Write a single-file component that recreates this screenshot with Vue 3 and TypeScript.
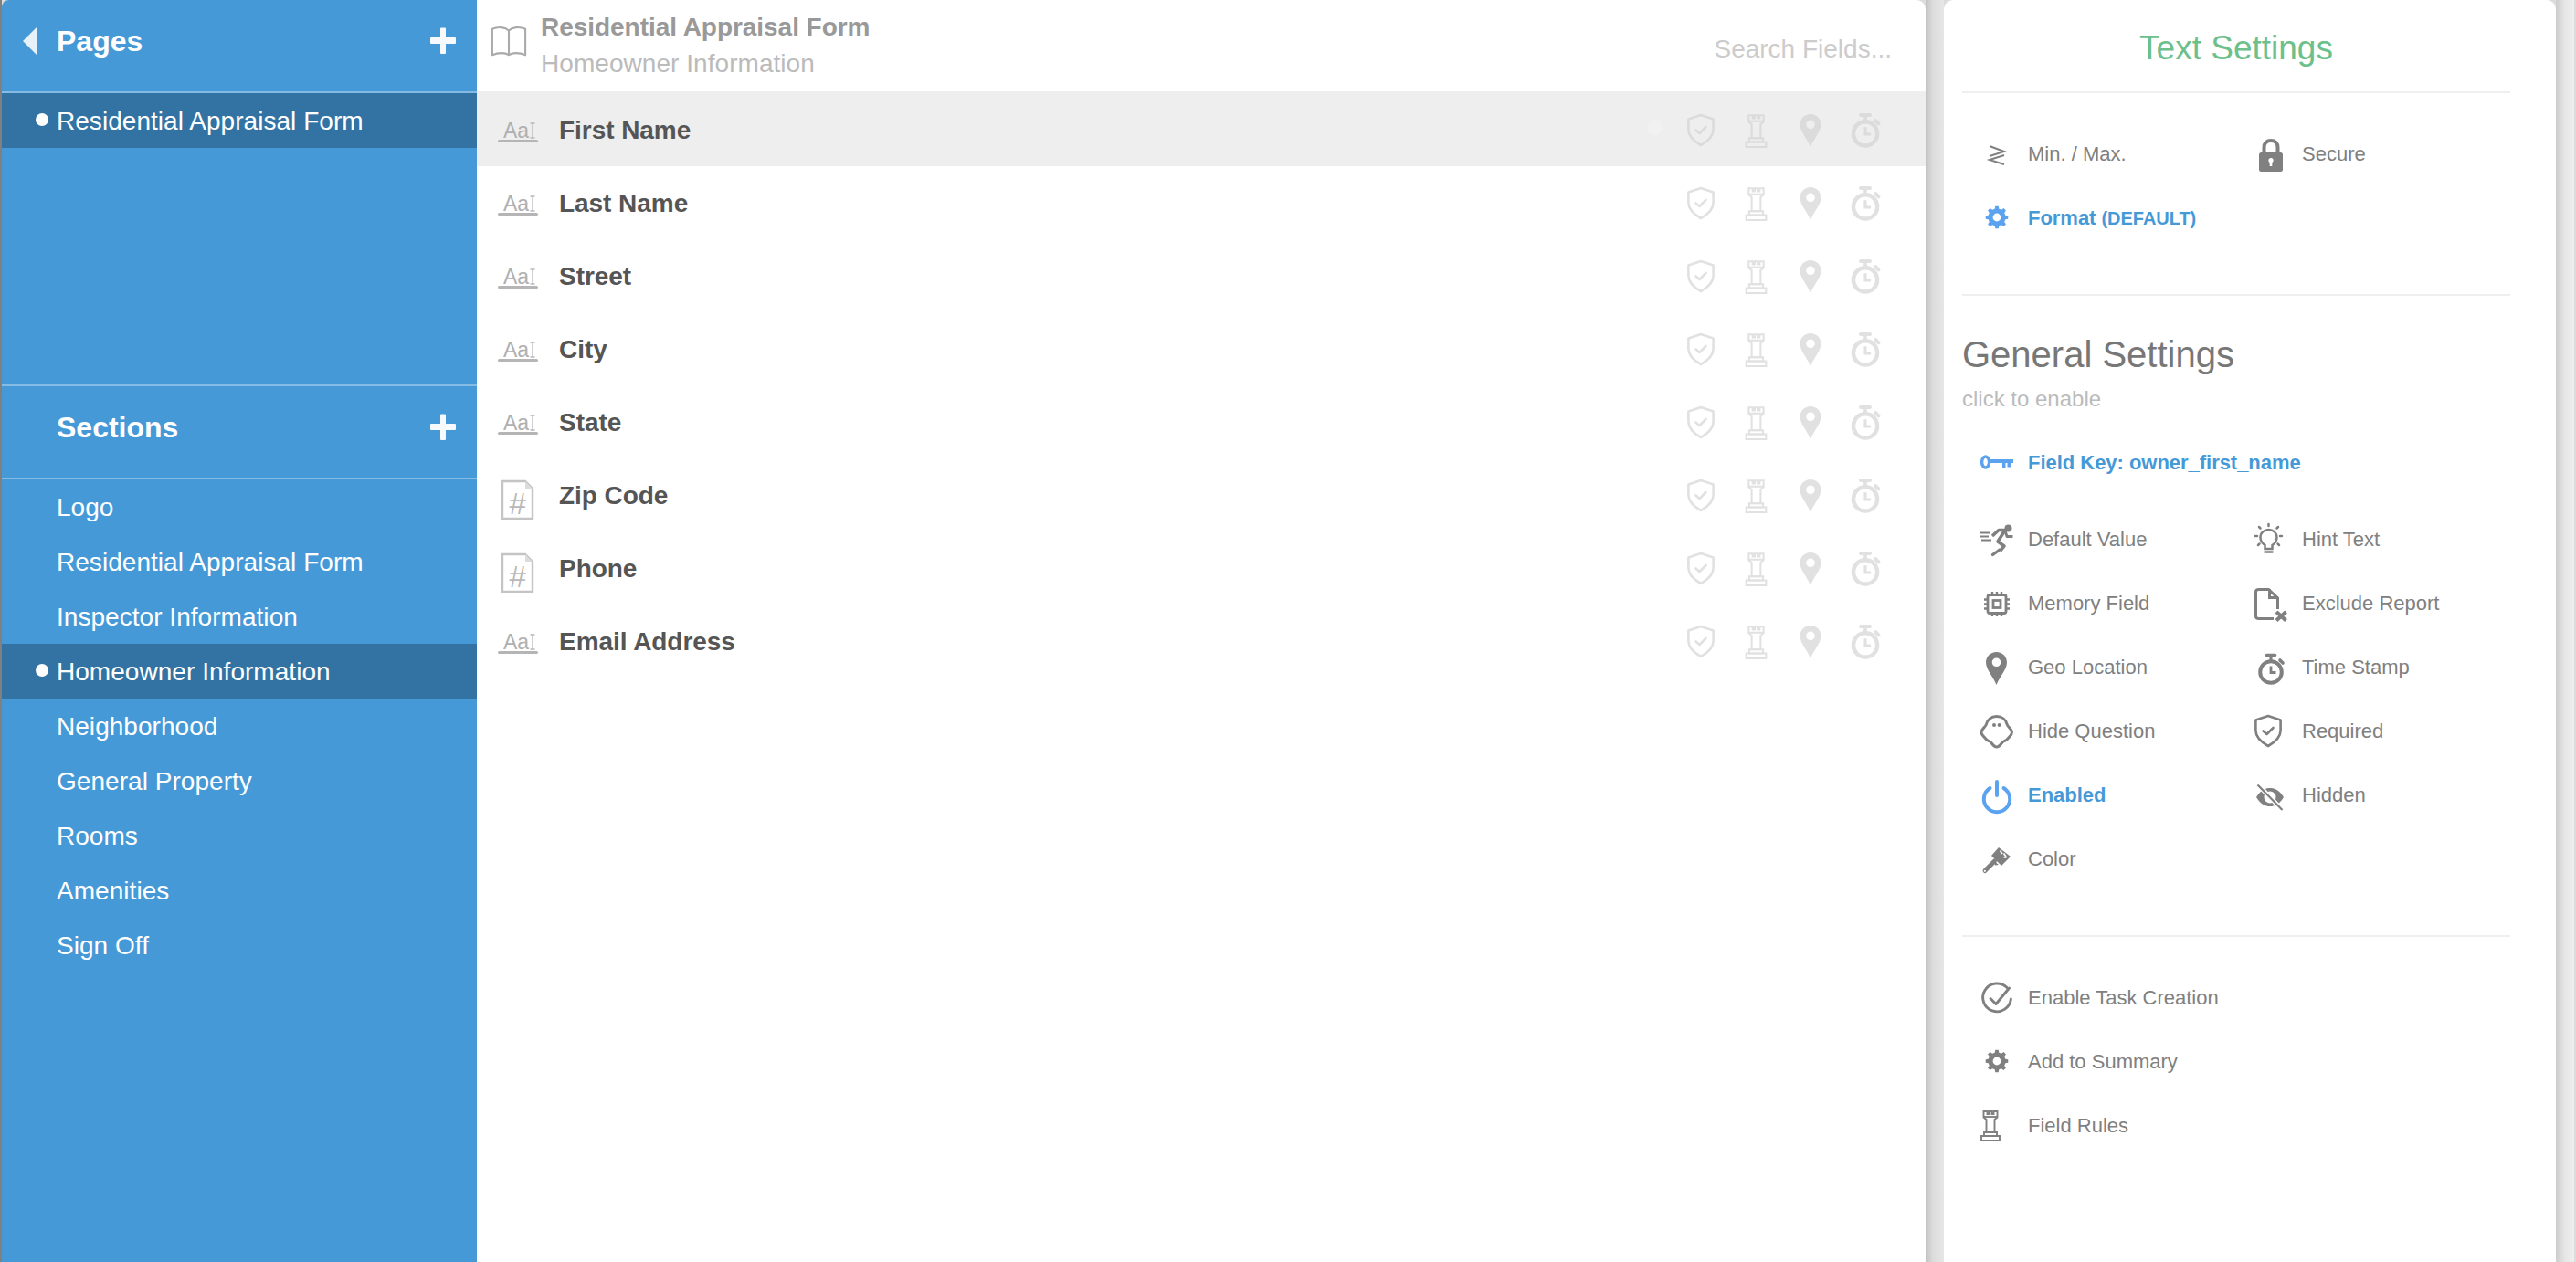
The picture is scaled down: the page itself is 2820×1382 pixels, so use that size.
<script setup lang="ts">
function gear(cx: number, cy: number, ro: number, ri: number, hole: number): string {
  const pts: string[] = [];
  const n = 8;
  for (let i = 0; i < n; i++) {
    const a = (i / n) * Math.PI * 2;
    const w = Math.PI / n;
    const seq: [number, number][] = [
      [ri, a - w * 0.62],
      [ro, a - w * 0.36],
      [ro, a + w * 0.36],
      [ri, a + w * 0.62],
    ];
    for (const [r, t] of seq) {
      pts.push(`${(cx + r * Math.sin(t)).toFixed(2)} ${(cy - r * Math.cos(t)).toFixed(2)}`);
    }
  }
  const ring = `M${cx - hole} ${cy}a${hole} ${hole} 0 1 0 ${hole * 2} 0a${hole} ${hole} 0 1 0 ${-hole * 2} 0Z`;
  return `<path fill="currentColor" fill-rule="evenodd" d="M${pts.join("L")}Z${ring}"/>`;
}

const icons: Record<string, string> = {
  shield:
    '<g fill="none" stroke="currentColor" stroke-width="2.6" stroke-linejoin="round" stroke-linecap="round"><path d="M15 2 L28.6 6.4 V18 C28.6 26 22 31 15 35 C8 31 1.4 26 1.4 18 V6.4 Z"/><path d="M9.5 18.5 L13.5 22 L20.5 15"/></g>',
  rook:
    '<g fill="none" stroke="currentColor" stroke-width="1.9"><path d="M3.5 3 H7.5 V6 H9.5 V3 H12.5 V6 H14.5 V3 H18.5 V9.5 L15.5 12 V26 H6.5 V12 L3.5 9.5 Z"/><path d="M3.5 9 H18.5"/><path d="M4 26 H18 V30 H4 Z"/><path d="M1 30 H21 V35 H1 Z"/></g>',
  pin:
    '<path fill="currentColor" fill-rule="evenodd" d="M17.5 2 C24 2 29 7 29 13.5 C29 21 21 29 17.5 38 C14 29 6 21 6 13.5 C6 7 11 2 17.5 2 Z M17.5 8.5 A4.8 4.8 0 1 0 17.5 18.1 A4.8 4.8 0 1 0 17.5 8.5 Z"/>',
  watch:
    '<g fill="none" stroke="currentColor"><circle cx="18" cy="24" r="11.8" stroke-width="4"/><path d="M13.5 5.5 H22.5" stroke-width="3.6" stroke-linecap="round"/><path d="M18 6 V11" stroke-width="3.2"/><path d="M28 11 L31 14" stroke-width="3.6" stroke-linecap="round"/><path d="M18 17.5 V24.5 H23.5" stroke-width="2.8"/></g>',
  minmax:
    '<g fill="none" stroke="currentColor" stroke-width="2"><path d="M10 10 L26 16 L10 21"/><path d="M26 20 L10 25 L26 30"/></g>',
  lock:
    '<path d="M10.5 18 V11.5 C10.5 6.5 13.5 4 18 4 C22.5 4 25.5 6.5 25.5 11.5 V18" fill="none" stroke="currentColor" stroke-width="4"/><rect x="5" y="17" width="26" height="21" rx="2.5" fill="currentColor"/><circle cx="18" cy="25.5" r="2.6" fill="#fff"/><rect x="16.7" y="26" width="2.6" height="6" fill="#fff"/>',
  gear: gear(18, 18, 12.4, 9.6, 4.4),
  key:
    '<g fill="none" stroke="currentColor"><ellipse cx="5.6" cy="18" rx="4" ry="6" stroke-width="3.4"/><path d="M9.5 17 H36" stroke-width="4"/></g><path fill="currentColor" d="M24 18 H27.5 V25 H24 Z M29.5 18 H33 V23.5 H29.5 Z"/>',
  runner:
    '<circle cx="30.5" cy="6.5" r="4" fill="currentColor"/><g fill="none" stroke="currentColor" stroke-linejoin="round"><path d="M0 11.5 H11 M0 15.5 H9 M1 19.5 H12" stroke-width="1.8"/><path d="M13 15 L20 8.5 L27 8.5 L19 21 L26 26 L22 31" stroke-width="3.6"/><path d="M27 9 L29 15.5 L35.5 15.5" stroke-width="2.8"/><path d="M13.5 35.5 L21 30" stroke-width="3.4" stroke-linecap="round"/></g>',
  chip:
    '<g fill="none" stroke="currentColor"><rect x="8" y="9.5" width="20" height="20" rx="2" stroke-width="2.8"/><rect x="14" y="15.5" width="8" height="8" stroke-width="2.8"/><path d="M13 6 V9 M18 6 V9 M23 6 V9 M13 30 V33 M18 30 V33 M23 30 V33 M4 14.5 H7 M4 19.5 H7 M4 24.5 H7 M29 14.5 H32 M29 19.5 H32 M29 24.5 H32" stroke-width="2.4"/></g>',
  ghost:
    '<path fill="none" stroke="currentColor" stroke-width="3" stroke-linejoin="round" d="M17.7 2.5 C24 2.5 28 6.5 29 11 C29.8 14.5 34.5 16 34.5 20 C34.5 23.5 31 25 29.8 27 C28.5 29.5 25.5 29 24 31 C22 33.5 20.5 36 17.7 36 C15 36 13.5 33.5 11.5 31 C10 29 7 29.5 5.8 27 C4.5 25 1 23.5 1 20 C1 16 5.7 14.5 6.5 11 C7.5 6.5 11.5 2.5 17.7 2.5 Z"/><circle cx="15" cy="12" r="2" fill="currentColor"/><circle cx="20.6" cy="12" r="2" fill="currentColor"/>',
  power:
    '<g fill="none" stroke="currentColor" stroke-linecap="round"><path d="M10.5 11 A14.2 14.2 0 1 0 25.5 11" stroke-width="4"/><path d="M18 4 V19" stroke-width="4"/></g>',
  brush:
    '<path fill="currentColor" d="M12 15 L20 6 L33 16 L23 26 Z"/><path d="M21.5 9.5 L24 13 M25.5 12.5 L28 16 M28.5 17 L25.5 17" fill="none" stroke="#fff" stroke-width="1.7"/><path d="M14.5 20.5 L20 25 L16 25.5 Z" fill="currentColor"/><path d="M15.5 21 L5 31.5" fill="none" stroke="currentColor" stroke-width="5" stroke-linecap="round"/><circle cx="4.8" cy="31.8" r="1.1" fill="#fff"/>',
  bulb:
    '<g fill="none" stroke="currentColor" stroke-width="2.5" stroke-linecap="round"><path d="M11.5 29 V25 C8.5 23 6.5 20 6.5 16.5 C6.5 11.5 10.5 8 15.5 8 C20.5 8 24.5 11.5 24.5 16.5 C24.5 20 22.5 23 19.5 25 V29 Z"/><path d="M11.5 32.5 H19.5" stroke-width="2.6"/><path d="M15.5 2 V4 M5 5 L6.5 6.5 M26 5 L24.5 6.5 M1 15 H3 M28 15 H30 M4 25 L5.5 23.5 M27 25 L25.5 23.5"/></g>',
  filex:
    '<path fill="none" stroke="currentColor" stroke-width="3" d="M25.5 25 V13 L15.5 3.5 H5 Q1.5 3.5 1.5 6 V33 Q1.5 35.5 5 35.5 H21"/><path fill="currentColor" d="M15 3 H18 V11 H26 V14 H15 Z"/><path fill="none" stroke="currentColor" stroke-width="4.2" d="M24 28 L34.5 37.5 M34.5 28 L24 37.5"/>',
  eye:
    '<path fill="currentColor" fill-rule="evenodd" d="M2 21 C7 13 12 11 17 11 C22 11 27 13 32 21 C27 29 22 31 17 31 C12 31 7 29 2 21 Z M17 14.5 A6.5 6.5 0 1 0 17 27.5 A6.5 6.5 0 1 0 17 14.5 Z"/><path d="M4 7.5 L30.5 35" stroke="#fff" stroke-width="5"/><path d="M3.5 7.5 L30.5 35" stroke="currentColor" stroke-width="2.2"/>',
  check:
    '<g fill="none" stroke="currentColor" stroke-width="2.9" stroke-linecap="round" stroke-linejoin="round"><path d="M29 7.5 A15.4 15.4 0 1 0 33.4 20"/><path d="M11 19.5 L17 25.5 L31.5 8"/></g>',
};

interface Setting { label: string; icon: string; on?: boolean }

const pages = ["Residential Appraisal Form"];
const sections = [
  "Logo",
  "Residential Appraisal Form",
  "Inspector Information",
  "Homeowner Information",
  "Neighborhood",
  "General Property",
  "Rooms",
  "Amenities",
  "Sign Off",
];
const fields: { name: string; kind: "text" | "num" }[] = [
  { name: "First Name", kind: "text" },
  { name: "Last Name", kind: "text" },
  { name: "Street", kind: "text" },
  { name: "City", kind: "text" },
  { name: "State", kind: "text" },
  { name: "Zip Code", kind: "num" },
  { name: "Phone", kind: "num" },
  { name: "Email Address", kind: "text" },
];
const rowIcons = [
  { name: "shield", vb: "-3 0 36 36", size: 36 },
  { name: "rook", vb: "-7 0 36 36", size: 39 },
  { name: "pin", vb: "-0.5 1 36 36", size: 36 },
  { name: "watch", vb: "0 2 36 36", size: 40 },
];
const general: Setting[] = [
  { label: "Default Value", icon: "runner" },
  { label: "Hint Text", icon: "bulb" },
  { label: "Memory Field", icon: "chip" },
  { label: "Exclude Report", icon: "filex" },
  { label: "Geo Location", icon: "pin" },
  { label: "Time Stamp", icon: "watch" },
  { label: "Hide Question", icon: "ghost" },
  { label: "Required", icon: "shield" },
  { label: "Enabled", icon: "power", on: true },
  { label: "Hidden", icon: "eye" },
  { label: "Color", icon: "brush" },
];
const extras: Setting[] = [
  { label: "Enable Task Creation", icon: "check" },
  { label: "Add to Summary", icon: "gear" },
  { label: "Field Rules", icon: "rook" },
];
</script>

<template>
  <div class="app">
    <aside class="sidebar">
      <header class="side-head">
        <svg class="back" width="15" height="30" viewBox="0 0 15 30"><path d="M15 0 V30 L0 15 Z" /></svg>
        <span class="side-title">Pages</span>
        <svg class="plus" width="30" height="30" viewBox="0 0 30 30"><path d="M12 1.5 Q12 0.5 13 0.5 H17 Q18 0.5 18 1.5 V11 H28 Q29 11 29 12 V17 Q29 18 28 18 H18 V28 Q18 29 17 29 H13 Q12 29 12 28 V18 H2 Q1 18 1 17 V12 Q1 11 2 11 H12 Z" /></svg>
      </header>
      <ul class="nav pages-list">
        <li v-for="p in pages" :key="p" class="nav-item active">{{ p }}</li>
      </ul>
      <header class="side-head sections-head">
        <span class="side-title">Sections</span>
        <svg class="plus" width="30" height="30" viewBox="0 0 30 30"><path d="M12 1.5 Q12 0.5 13 0.5 H17 Q18 0.5 18 1.5 V11 H28 Q29 11 29 12 V17 Q29 18 28 18 H18 V28 Q18 29 17 29 H13 Q12 29 12 28 V18 H2 Q1 18 1 17 V12 Q1 11 2 11 H12 Z" /></svg>
      </header>
      <ul class="nav">
        <li
          v-for="s in sections"
          :key="s"
          class="nav-item"
          :class="{ active: s === 'Homeowner Information' }"
        >{{ s }}</li>
      </ul>
    </aside>

    <main class="main">
      <header class="main-head">
        <svg class="book" width="40" height="36" viewBox="0 0 42 36">
          <path d="M21 6 C17 2 9 1 2 4 V34 C9 31 17 31 21 34 C25 31 33 31 40 34 V4 C33 1 25 2 21 6 Z M21 6 V34" fill="none" stroke="#aaa" stroke-width="2.2" stroke-linejoin="round" />
        </svg>
        <div class="crumbs">
          <div class="crumb-title">Residential Appraisal Form</div>
          <div class="crumb-sub">Homeowner Information</div>
        </div>
        <div class="search">Search Fields...</div>
      </header>
      <div class="fields">
        <div v-for="(f, i) in fields" :key="f.name" class="field" :class="{ current: i === 0 }">
          <svg v-if="f.kind === 'text'" class="type-icon" width="48" height="30" viewBox="0 0 48 30">
            <text x="7" y="20.5" class="aa">Aa</text>
            <path d="M36.5 5 H41.5 M36.5 21 H41.5 M39 5 V21" fill="none" stroke="#b8b8b8" stroke-width="1.3" />
            <rect x="1" y="23" width="44" height="3" rx="1.5" fill="#b5b5b5" />
          </svg>
          <svg v-else class="type-icon doc" width="48" height="44" viewBox="0 0 48 44">
            <path d="M6 2 H31 L39 10 V43 H6 Z" fill="none" stroke="#c4c4c4" stroke-width="2.4" />
            <path d="M31 2 V10 H39 Z" fill="#dcdcdc" />
            <text x="22.7" y="37.5" text-anchor="middle" class="hash">#</text>
          </svg>
          <span class="field-name">{{ f.name }}</span>
          <span v-if="i === 0" class="hover-dot"></span>
          <div class="row-icons">
            <span v-for="r in rowIcons" :key="r.name" class="row-icon">
              <svg :width="r.size" :height="r.size" :viewBox="r.vb" v-html="icons[r.name]"></svg>
            </span>
          </div>
        </div>
      </div>
    </main>

    <div class="gutter"></div>

    <section class="panel">
      <h2 class="panel-title">Text Settings</h2>
      <div class="grid first-grid">
        <div class="item"><svg class="ic" viewBox="0 0 36 36" v-html="icons.minmax"></svg><span>Min. / Max.</span></div>
        <div class="item"><svg class="ic" viewBox="0 0 36 36" v-html="icons.lock"></svg><span>Secure</span></div>
        <div class="item on"><svg class="ic" viewBox="0 0 36 36" v-html="icons.gear"></svg><span>Format <small>(DEFAULT)</small></span></div>
      </div>
      <hr class="rule rule-a" />
      <h3 class="general">General Settings</h3>
      <p class="hint">click to enable</p>
      <div class="item on key"><svg class="ic" viewBox="0 0 36 36" v-html="icons.key"></svg><span>Field Key: owner_first_name</span></div>
      <div class="grid general-grid">
        <div v-for="g in general" :key="g.label" class="item" :class="{ on: g.on }">
          <svg class="ic" viewBox="0 0 36 36" v-html="icons[g.icon]"></svg><span>{{ g.label }}</span>
        </div>
      </div>
      <hr class="rule rule-b" />
      <div class="extras">
        <div v-for="e in extras" :key="e.label" class="item">
          <svg class="ic" viewBox="0 0 36 36" v-html="icons[e.icon]"></svg><span>{{ e.label }}</span>
        </div>
      </div>
    </section>

    <div class="gutter gutter-end"></div>
  </div>
</template>

<style>
html, body { margin: 0; background: #808080; }
</style>

<style scoped>
.app {
  display: flex;
  width: 2820px;
  height: 1382px;
  overflow: hidden;
  box-sizing: border-box;
  border-left: 2px solid #808080;
  background: #dcdcdc;
  font-family: "Liberation Sans", Arial, sans-serif;
}
.sidebar {
  flex: 0 0 520px;
  background: #4699d7;
  color: #fff;
  border-top-left-radius: 8px;
}
.side-head {
  display: flex;
  align-items: center;
  height: 102px;
  padding: 0 22px 10px 23px;
  box-sizing: border-box;
  border-bottom: 2px solid #86bbe5;
}
.sections-head {
  border-top: 2px solid #86bbe5;
  height: 104px;
  padding-left: 60px;
}
.back { fill: #e6f1fa; margin-right: 22px; }
.plus { fill: #f6fafd; margin-left: auto; }
.side-title { font-size: 32px; font-weight: 700; }
.nav { list-style: none; margin: 0; padding: 0; }
.pages-list { height: 319px; }
.nav-item {
  position: relative;
  height: 60px;
  line-height: 61px;
  padding-left: 60px;
  font-size: 28px;
  letter-spacing: 0.04px;
}
.nav-item.active { background: #3273a4; }
.nav-item.active::before {
  content: "";
  position: absolute;
  left: 37px;
  top: 22px;
  width: 14px;
  height: 14px;
  border-radius: 50%;
  background: #fff;
}
.main {
  flex: 0 0 1586px;
  min-width: 0;
  background: #fff;
  border-top-right-radius: 10px;
}
.main-head {
  display: flex;
  height: 100px;
  box-sizing: border-box;
  padding: 10px 37px 0 15px;
}
.book { margin: 17px 15px 0 0; }
.crumbs { font-size: 28px; line-height: 40px; }
.crumb-title { font-weight: 700; color: #999; letter-spacing: -0.04px; }
.crumb-sub { color: #bbb; letter-spacing: 0.05px; }
.search { margin-left: auto; padding-top: 24px; line-height: 40px; font-size: 28px; color: #ccc; }
.field {
  display: flex;
  align-items: center;
  position: relative;
  box-sizing: border-box;
  height: 80px;
  padding-left: 22px;
  padding-right: 46px;
}
.field.current { background: #eee; height: 82px; padding-top: 2px; }
.type-icon { flex: 0 0 48px; margin-top: 6px; }
.type-icon.doc { margin-top: 10px; }
.aa { font-size: 23px; fill: #b0b0b0; font-family: "Liberation Sans", Arial, sans-serif; }
.hash { font-size: 33px; fill: #b8b8b8; font-family: "Liberation Sans", Arial, sans-serif; }
.field-name {
  margin: 2px 0 0 20px;
  font-size: 28px;
  font-weight: 700;
  color: #555;
  letter-spacing: -0.05px;
}
.hover-dot {
  position: absolute;
  left: 1281px;
  top: 31px;
  width: 17px;
  height: 17px;
  border-radius: 50%;
  background: #f1f1f1;
}
.row-icons { margin-left: auto; display: flex; gap: 20px; color: #e1e1e1; }
.current .row-icons { color: #dbdbdb; }
.row-icon { display: flex; align-items: center; justify-content: center; width: 40px; height: 40px; }
.row-icon svg { overflow: visible; }
.gutter {
  flex: 0 0 20px;
  background: linear-gradient(90deg, #c2c2c2, #dcdcdc 40%, #e6e6e6);
}
.gutter-end {
  background: linear-gradient(90deg, #cdcdcd, #e6e6e6 50%, #eeeeee);
}
.panel {
  flex: 0 0 670px;
  min-width: 0;
  box-sizing: border-box;
  padding: 0 50px 0 20px;
  background: #fff;
  border-radius: 10px 10px 0 0;
  color: #808080;
  font-size: 22px;
}
.panel-title {
  margin: 0;
  height: 100px;
  line-height: 106px;
  text-align: center;
  font-size: 37px;
  font-weight: 400;
  color: #6cc08b;
  border-bottom: 2px solid #efefef;
}
.grid {
  display: grid;
  grid-template-columns: 300px 280px;
  padding-left: 20px;
}
.first-grid { margin-top: 31px; }
.item {
  display: flex;
  align-items: center;
  gap: 16px;
  height: 70px;
  line-height: 28px;
}
.item span { padding-top: 1px; }
.item .ic { flex: 0 0 36px; width: 36px; height: 36px; overflow: visible; }
.item.on { color: #4699d7; font-weight: 700; letter-spacing: -0.03px; }
.item.on .ic { color: #5ba2ef; }
.item small { font-size: 20px; }
.rule { margin: 0; border: 0; height: 2px; background: #efefef; }
.rule-a { margin-top: 49px; }
.rule-b { margin-top: 49px; }
.general {
  margin: 40px 0 0;
  font-size: 40px;
  font-weight: 400;
  line-height: 48px;
  color: #777;
}
.hint { margin: 10px 0 0; font-size: 24px; line-height: 30px; color: #bbb; }
.key { margin: 19px 0 14px 20px; }
.extras { padding: 31px 0 0 20px; }
</style>
